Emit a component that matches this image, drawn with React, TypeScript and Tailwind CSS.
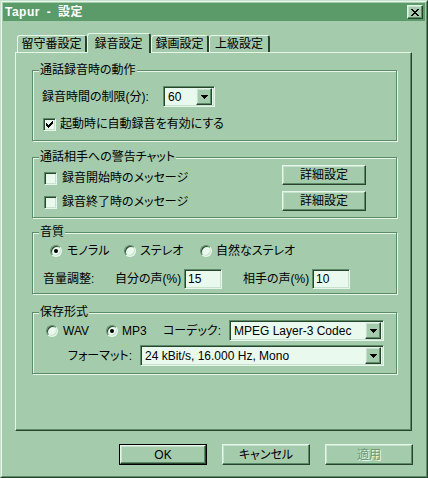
import React from "react";

function CheckGlyph() {
  return (
    <svg width="7" height="7" viewBox="0 0 7 7" shapeRendering="crispEdges" fill="#000">
      <rect x="6" y="0" width="1" height="1" />
      <rect x="5" y="1" width="2" height="1" />
      <rect x="0" y="2" width="1" height="1" />
      <rect x="4" y="2" width="3" height="1" />
      <rect x="0" y="3" width="2" height="1" />
      <rect x="3" y="3" width="3" height="1" />
      <rect x="0" y="4" width="5" height="1" />
      <rect x="1" y="5" width="3" height="1" />
      <rect x="2" y="6" width="1" height="1" />
    </svg>
  );
}

function ArrowGlyph() {
  return (
    <svg width="7" height="4" viewBox="0 0 7 4" shapeRendering="crispEdges" fill="#000">
      <rect x="0" y="0" width="7" height="1" />
      <rect x="1" y="1" width="5" height="1" />
      <rect x="2" y="2" width="3" height="1" />
      <rect x="3" y="3" width="1" height="1" />
    </svg>
  );
}

function CloseGlyph() {
  return (
    <svg width="8" height="7" viewBox="0 0 8 7" shapeRendering="crispEdges" fill="#000">
      <rect x="0" y="0" width="2" height="1" />
      <rect x="6" y="0" width="2" height="1" />
      <rect x="1" y="1" width="2" height="1" />
      <rect x="5" y="1" width="2" height="1" />
      <rect x="2" y="2" width="4" height="1" />
      <rect x="3" y="3" width="2" height="1" />
      <rect x="2" y="4" width="4" height="1" />
      <rect x="1" y="5" width="2" height="1" />
      <rect x="5" y="5" width="2" height="1" />
      <rect x="0" y="6" width="2" height="1" />
      <rect x="6" y="6" width="2" height="1" />
    </svg>
  );
}

const raised =
  "border border-t-[#e6f6ea] border-l-[#e6f6ea] border-b-[#28442e] border-r-[#28442e] shadow-[inset_-1px_-1px_0_#5c8c66,inset_1px_1px_0_#c6e2cc] bg-[#a5cbad]";
const sunken =
  "border border-t-[#5c8c66] border-l-[#5c8c66] border-b-[#e6f6ea] border-r-[#e6f6ea] shadow-[inset_1px_1px_0_#28442e,inset_-1px_-1px_0_#c6e2cc] bg-[#e9f9ed]";

function Checkbox({ checked }: { checked?: boolean }) {
  return (
    <span className={"w-[13px] h-[13px] shrink-0 flex items-center justify-center " + sunken}>
      {checked ? <CheckGlyph /> : null}
    </span>
  );
}

function Radio({ checked }: { checked?: boolean }) {
  return (
    <span
      className={
        "w-[12px] h-[12px] shrink-0 rounded-full flex items-center justify-center " + sunken
      }
    >
      {checked ? <span className="w-[4px] h-[4px] rounded-full bg-black" /> : null}
    </span>
  );
}

function Combo({ value, w }: { value: string; w: string }) {
  return (
    <div className={"h-[21px] flex items-center pl-[4px] pr-[2px] " + sunken + " " + w}>
      <span className="flex-1 whitespace-nowrap">{value}</span>
      <span className={"w-[16px] h-[17px] shrink-0 flex items-center justify-center " + raised}>
        <ArrowGlyph />
      </span>
    </div>
  );
}

function Group({
  label,
  className,
  children,
}: {
  label: string;
  className: string;
  children: React.ReactNode;
}) {
  return (
    <div
      className={
        "relative w-[365px] border border-[#5c8c66] shadow-[inset_1px_1px_0_#e6f6ea,1px_1px_0_#e6f6ea] " +
        className
      }
    >
      <span className="absolute left-[6px] top-[-8px] px-[1px] bg-[#a5cbad] leading-[14px]">
        {label}
      </span>
      {children}
    </div>
  );
}

export default function App() {
  return (
    <div className="w-[428px] h-[478px] bg-[#a5cbad] border border-t-[#c6e2cc] border-l-[#c6e2cc] border-r-[#28442e] border-b-[#28442e] font-['Liberation_Sans','Noto_Sans_CJK_JP',sans-serif] text-[12px] leading-[14px] text-black [font-feature-settings:'palt']">
      <div className="h-full border border-t-[#e6f6ea] border-l-[#e6f6ea] border-r-[#5c8c66] border-b-[#5c8c66] p-[1px] flex flex-col">
        {/* Title bar */}
        <div className="h-[18px] bg-[#5b9a69] flex items-center justify-between pl-[2px] pr-[2px]">
          <span className="text-white font-bold tracking-[0.5px] [word-spacing:3px]">Tapur - 設定</span>
          <span className={"w-[16px] h-[14px] flex items-center justify-center " + raised}>
            <CloseGlyph />
          </span>
        </div>

        {/* Tabs */}
        <div className="mt-[12px] ml-[12px] h-[19px] flex items-end">
          <div className="ml-[2px] w-[70px] h-[17px] flex items-center justify-center border-t border-l border-[#e6f6ea] border-r-2 border-r-[#28442e] rounded-tl-[3px] rounded-tr-[3px]">
            留守番設定
          </div>
          <div className="relative z-10 -mb-[1px] w-[64px] h-[20px] flex items-center justify-center bg-[#a5cbad] border-t border-l border-[#e6f6ea] border-r-2 border-r-[#28442e] rounded-tl-[3px] rounded-tr-[3px]">
            録音設定
          </div>
          <div className="w-[58px] h-[17px] flex items-center justify-center border-t border-l border-[#e6f6ea] border-r-2 border-r-[#28442e] rounded-tl-[3px] rounded-tr-[3px]">
            録画設定
          </div>
          <div className="w-[61px] h-[17px] flex items-center justify-center border-t border-l border-[#e6f6ea] border-r-2 border-r-[#28442e] rounded-tl-[3px] rounded-tr-[3px]">
            上級設定
          </div>
        </div>

        {/* Panel */}
        <div className="ml-[12px] w-[397px] h-[379px] border border-t-[#e6f6ea] border-l-[#e6f6ea] border-r-[#28442e] border-b-[#28442e] shadow-[inset_-1px_-1px_0_#5c8c66] pl-[16px] flex flex-col">
          {/* Group 1 */}
          <Group label="通話録音時の動作" className="mt-[17px] h-[71px] flex flex-col">
            <div className="mt-[15px] h-[21px] flex items-center">
              <span className="ml-[9px] w-[121px]">録音時間の制限(分):</span>
              <Combo value="60" w="w-[52px]" />
            </div>
            <div className="mt-[10px] h-[14px] flex items-center">
              <span className="ml-[10px]">
                <Checkbox checked />
              </span>
              <span className="ml-[4px]">起動時に自動録音を有効にする</span>
            </div>
          </Group>

          {/* Group 2 */}
          <Group label="通話相手への警告チャット" className="mt-[16px] h-[61px] flex flex-col">
            <div className="mt-[7px] h-[20px] flex items-start">
              <div className="mt-[6px] ml-[11px] h-[14px] flex items-center">
                <Checkbox />
                <span className="ml-[5px]">録音開始時のメッセージ</span>
              </div>
              <div className={"ml-auto mr-[30px] w-[84px] h-[20px] flex items-center justify-center " + raised}>
                詳細設定
              </div>
            </div>
            <div className="mt-[6px] h-[20px] flex items-start">
              <div className="mt-[4px] ml-[11px] h-[14px] flex items-center">
                <Checkbox />
                <span className="ml-[5px]">録音終了時のメッセージ</span>
              </div>
              <div className={"ml-auto mr-[30px] w-[84px] h-[20px] flex items-center justify-center " + raised}>
                詳細設定
              </div>
            </div>
          </Group>

          {/* Group 3 */}
          <Group label="音質" className="mt-[14px] h-[62px] flex flex-col">
            <div className="mt-[11px] h-[14px] flex items-center">
              <div className="ml-[17px] w-[74px] flex items-center">
                <Radio checked />
                <span className="ml-[5px]">モノラル</span>
              </div>
              <div className="w-[76px] flex items-center">
                <Radio />
                <span className="ml-[4px]">ステレオ</span>
              </div>
              <div className="flex items-center">
                <Radio />
                <span className="ml-[4px]">自然なステレオ</span>
              </div>
            </div>
            <div className="mt-[11px] h-[20px] flex items-center">
              <span className="ml-[10px] w-[72px]">音量調整:</span>
              <span className="w-[69px]">自分の声(%)</span>
              <div className={"w-[38px] h-[20px] flex items-center pl-[3px] " + sunken}>15</div>
              <span className="ml-[21px] w-[69px]">相手の声(%)</span>
              <div className={"w-[38px] h-[20px] flex items-center pl-[3px] " + sunken}>10</div>
            </div>
          </Group>

          {/* Group 4 */}
          <Group label="保存形式" className="mt-[18px] h-[62px] flex flex-col">
            <div className="mt-[7px] h-[21px] flex items-center">
              <div className="ml-[13px] w-[60px] flex items-center">
                <Radio />
                <span className="ml-[5px]">WAV</span>
              </div>
              <div className="w-[57px] flex items-center">
                <Radio checked />
                <span className="ml-[4px]">MP3</span>
              </div>
              <span className="w-[66px]">コーデック:</span>
              <Combo value="MPEG Layer-3 Codec" w="w-[155px]" />
            </div>
            <div className="mt-[4px] h-[21px] flex items-center">
              <span className="ml-[35px] w-[72px]">フォーマット:</span>
              <Combo value="24 kBit/s, 16.000 Hz, Mono" w="w-[244px]" />
            </div>
          </Group>
        </div>

        {/* Buttons */}
        <div className="mt-[13px] ml-[116px] flex gap-[15px]">
          <div className="w-[88px] h-[21px] border border-black flex">
            <div className={"flex-1 flex items-center justify-center " + raised}>OK</div>
          </div>
          <div className={"w-[88px] h-[21px] flex items-center justify-center " + raised}>
            キャンセル
          </div>
          <div
            className={
              "w-[88px] h-[21px] flex items-center justify-center text-[#6a9a74] [text-shadow:1px_1px_0_#e6f6ea] " +
              raised
            }
          >
            適用
          </div>
        </div>
      </div>
    </div>
  );
}
